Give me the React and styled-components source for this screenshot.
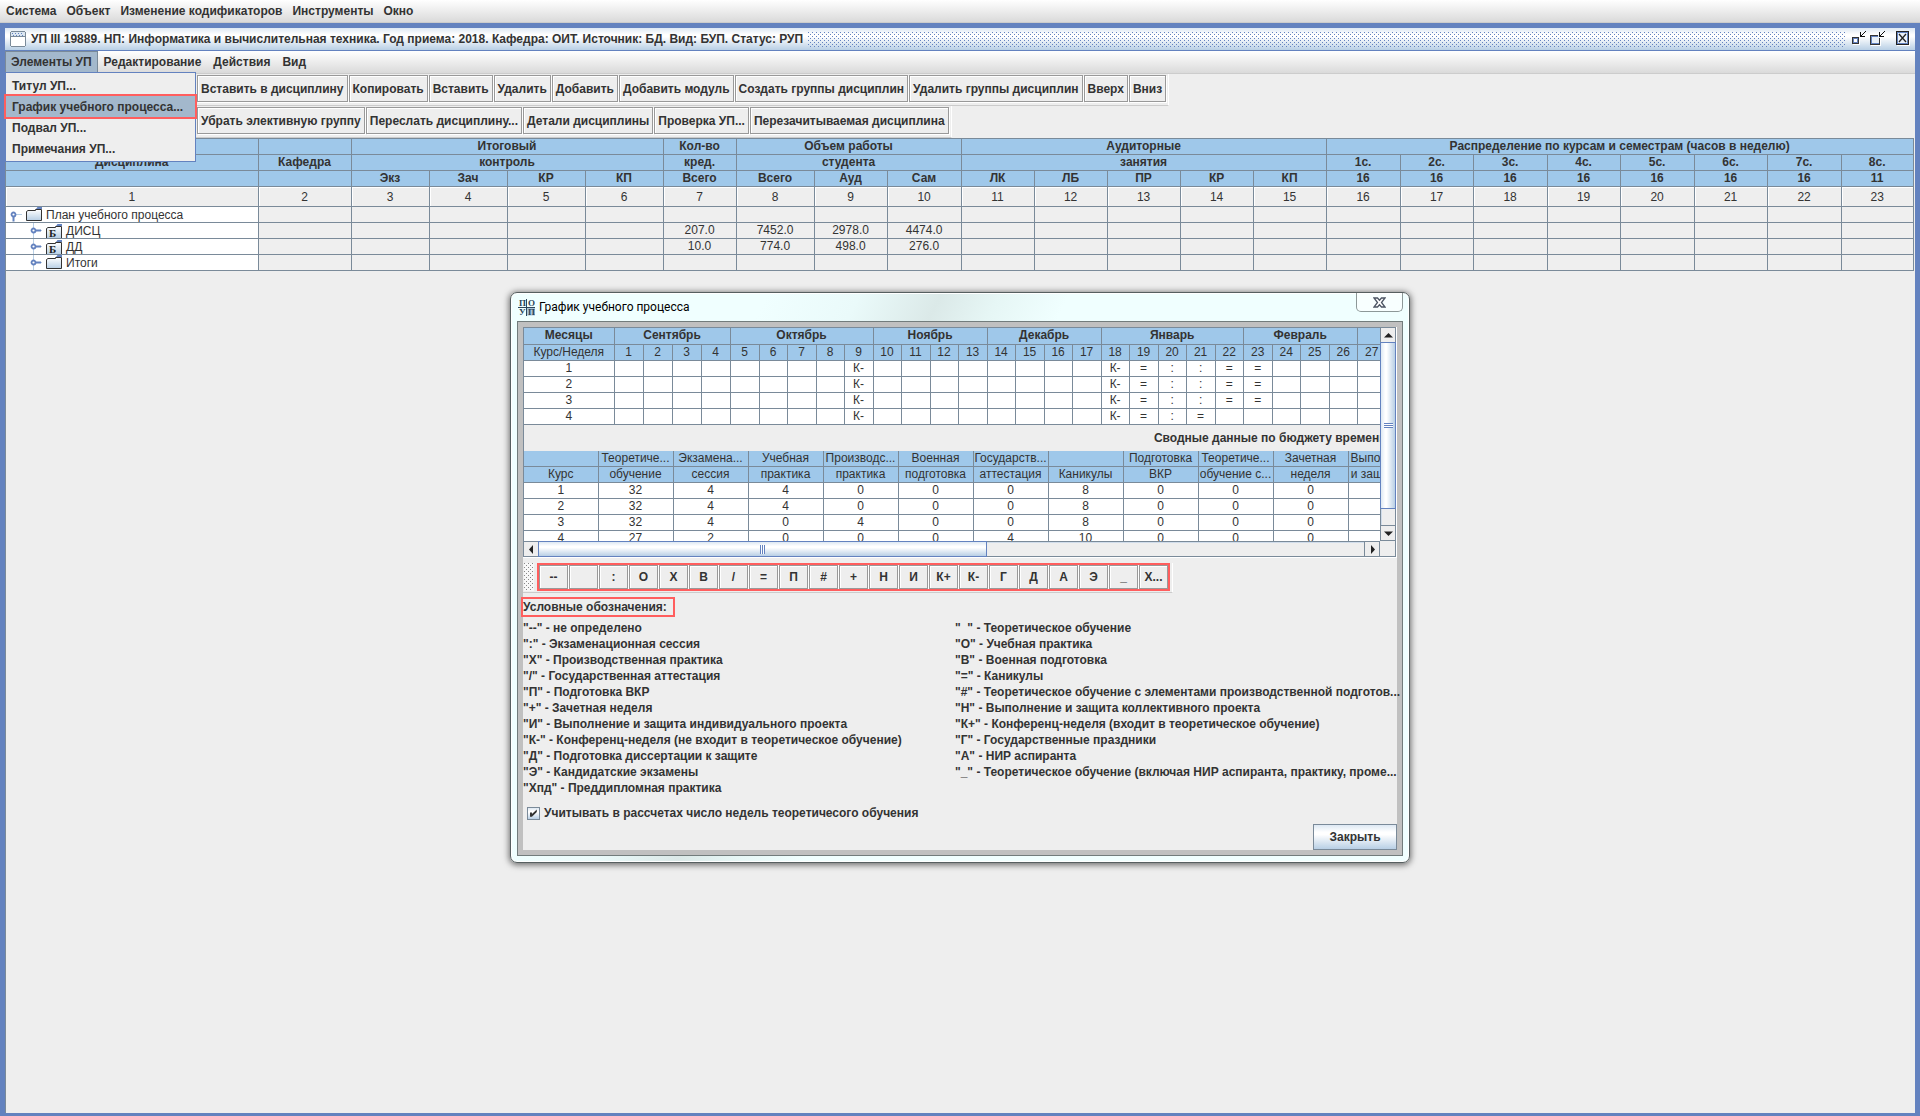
import React from "react";
import styled, { createGlobalStyle, css } from "styled-components";

const c = {
  frame: "#6382bf",
  line: "#7a8a99",
  head: "#9fc8ea",
  panel: "#eeeeee",
  text: "#333333",
  mark: "#ff5e5e",
  select: "#a3b8cc",
};

const Global = createGlobalStyle`
  * { box-sizing: border-box; }
  body { margin: 0; background: ${c.panel}; color: ${c.text}; font: bold 12px/16px "Liberation Sans", Arial, sans-serif; }
  button, input { font: inherit; color: inherit; margin: 0; }
  button { border-radius: 0; white-space: nowrap; }
`;

const metal = css`
  background: linear-gradient(#dde8f3 0%, #ffffff 30%, #ffffff 40%, #b8cfe5 100%);
`;

const dots = (color) => css`
  background-image: conic-gradient(at 1px 1px, transparent 75%, ${color} 0),
    conic-gradient(at 1px 1px, transparent 75%, ${color} 0);
  background-size: 4px 4px;
  background-position: 0 0, 2px 2px;
`;

const Page = styled.div`
  min-height: 100vh;
  display: flex;
  flex-direction: column;
`;

const MenuBar = styled.nav`
  height: 23px;
  display: flex;
  align-items: stretch;
  padding-left: ${(p) => p.$inset || 0}px;
  background: linear-gradient(#ffffff, #dadada);
  border-bottom: 1px solid #cccccc;
`;

const MenuTitle = styled.button`
  border: 1px solid ${(p) => (p.$open ? c.line : "transparent")};
  border-bottom: 0;
  background: ${(p) => (p.$open ? c.select : "transparent")};
  padding: 0 ${(p) => p.$pad || 5}px 2px;
`;

const Frame = styled.main`
  flex: 1;
  display: flex;
  flex-direction: column;
  border: solid ${c.frame};
  border-width: 5px 5px 3px;
  background: ${c.panel};
`;

const TitleBar = styled.header`
  height: 23px;
  display: flex;
  align-items: center;
  gap: 5px;
  padding: 0 4px 0 5px;
  border-bottom: 1px solid ${c.frame};
  ${metal}
`;

const WindowTitle = styled.h1`
  margin: 0;
  font: inherit;
  white-space: nowrap;
`;

const Bumps = styled.div`
  flex: 1;
  height: 15px;
  ${dots("#6382bf")}
`;

const IconButton = styled.button`
  display: flex;
  padding: 0;
  border: 0;
  background: none;
`;

const Controls = styled.div`
  display: flex;
  gap: 2px;
  & > :last-child { margin-left: 8px; }
`;

const Body = styled.div`
  flex: 1;
  border-left: 1px solid ${c.line};
  position: relative;
`;

const MenuPopup = styled.div`
  position: absolute;
  z-index: 2;
  top: -2px;
  left: -1px;
  width: 191px;
  display: flex;
  flex-direction: column;
  padding: 2px 0;
  background: ${c.panel};
  border: 1px solid ${c.frame};
`;

const MenuItem = styled.button`
  height: 21px;
  padding: 0 6px;
  text-align: left;
  border: 0;
  background: ${(p) => (p.$marked ? c.select : "transparent")};
  outline: ${(p) => (p.$marked ? `2px solid ${c.mark}` : "none")};
`;

const ToolRow = styled.div`
  width: max-content;
  display: flex;
  gap: 1px;
  padding: 1px 2px 3px 191px;
  border-right: 1px solid #ffffff;
  border-bottom: 1px solid #cccccc;
`;

const ToolButton = styled.button`
  height: 27px;
  padding: 0 3px;
  border: 1px solid #999999;
  background: ${c.panel};
  box-shadow: inset 1px 1px #ffffff, 1px 1px #ffffff;
`;

const Grid = styled.table`
  table-layout: fixed;
  border-collapse: collapse;
  width: ${(p) => p.$width || "100%"};
  font-weight: normal;
  text-align: center;
  th, td {
    height: 16px;
    padding: 0;
    line-height: 15px;
    border: 1px solid ${c.line};
    white-space: nowrap;
    overflow: hidden;
  }
  th { background: ${c.head}; font-weight: ${(p) => p.$headWeight || "bold"}; }
  td { background: ${(p) => p.$cell || "#ffffff"}; }
  th:first-child, td:first-child { border-left: 0; }
`;

const PaneGrid = styled(Grid)`
  thead tr:first-child th { border-top: 0; }
`;

const NumberRow = styled.tr`
  && td { height: 20px; padding-top: 2px; background: ${c.panel}; box-shadow: inset 1px 1px #ffffff; }
`;

const WeekHead = styled.th`
  && { font-weight: normal; }
`;

const TreeCell = styled.td`
  && { background: #ffffff; }
`;

const TreeNode = styled.div`
  height: 15px;
  display: flex;
  align-items: center;
  gap: 4px;
  padding-left: ${(p) => 4 + p.$level * 20}px;
`;

const NodeName = styled.span`
  padding-top: 2px;
`;

const Dialog = styled.section`
  position: absolute;
  z-index: 3;
  top: 292px;
  left: 0;
  right: 0;
  margin: 0 auto;
  width: 900px;
  padding: 0 6px 6px;
  border: 1px solid #565f60;
  border-radius: 7px;
  background: linear-gradient(115deg, #f0ffff 0 22%, #eafafa 30%, #dbe9e8 37%, #e6f6f5 42%, #f0ffff 48%);
  box-shadow: 0 1px 6px 1px rgba(0, 0, 0, 0.55), inset 0 0 0 1px #ffffff;
`;

const DialogTitle = styled.header`
  height: 28px;
  display: flex;
  align-items: center;
  gap: 4px;
  padding-left: 1px;
`;

const DialogName = styled.h2`
  flex: 1;
  margin: 0;
  color: #000000;
  font: 12px/16px Roboto, "Open Sans", sans-serif;
`;

const DialogClose = styled.button`
  align-self: flex-start;
  width: 47px;
  height: 19px;
  display: flex;
  align-items: center;
  justify-content: center;
  padding: 0;
  border: 1px solid #8d9898;
  border-top: 0;
  border-radius: 0 0 5px 5px;
  background: rgba(255, 255, 255, 0.5);
`;

const DialogBody = styled.div`
  display: flex;
  flex-direction: column;
  border: 1px solid #727c7c;
  background: ${c.panel};
  box-shadow: inset 0 0 0 5px #c0c0c0;
  padding: 5px;
`;

const ScrollPane = styled.div`
  display: grid;
  grid-template-columns: minmax(0, 1fr) 16px;
  grid-template-rows: 214px 16px;
  border-right: 1px solid #ffffff;
  border-bottom: 1px solid #ffffff;
`;

const Viewport = styled.div`
  overflow: hidden;
  border: solid ${c.line};
  border-width: 1px 0 0 1px;
`;

const SummaryTitle = styled.h3`
  width: 1564px;
  margin: 0;
  padding: 5px 0;
  font: inherit;
  text-align: center;
`;

const ScrollBar = styled.div`
  display: flex;
  flex-direction: ${(p) => (p.$vertical ? "column" : "row")};
  border: 1px solid ${c.line};
  box-shadow: inset 1px 1px #d0dcea;
`;

const ScrollArrow = styled.button`
  flex: 0 0 15px;
  display: flex;
  align-items: center;
  justify-content: center;
  padding: 0;
  border: solid ${c.line};
  border-width: ${(p) => p.$edge};
  background: ${c.panel};
`;

const Thumb = styled.div`
  flex: 0 0 ${(p) => p.$size};
  display: flex;
  align-items: center;
  justify-content: center;
  outline: 1px solid ${c.frame};
  background: linear-gradient(${(p) => (p.$vertical ? "90deg" : "180deg")}, #dde8f3 0%, #ffffff 30%, #ffffff 40%, #b8cfe5 100%);
`;

const Ridges = styled.i`
  width: ${(p) => (p.$vertical ? 9 : 5)}px;
  height: ${(p) => (p.$vertical ? 5 : 9)}px;
  background: repeating-linear-gradient(${(p) => (p.$vertical ? "180deg" : "90deg")}, ${c.frame} 0 1px, #ffffff 1px 2px);
`;

const Track = styled.div`
  flex: 1;
`;

const Corner = styled.div`
  border: solid ${c.line};
  border-width: 0 1px 1px 0;
`;

const SymbolBar = styled.div`
  align-self: flex-start;
  display: flex;
  align-items: stretch;
  gap: 3px;
  margin-top: 5px;
  padding: 0 2px 1px 1px;
  border-right: 1px solid #ffffff;
  border-bottom: 1px solid #cccccc;
`;

const Grip = styled.div`
  width: 10px;
  background-color: #f8f8f8;
  ${dots("#888888")}
`;

const Symbols = styled.div`
  display: flex;
  gap: 1px;
  border: 2px solid ${c.mark};
  background: #ffffff;
`;

const SymbolButton = styled.button`
  width: 29px;
  height: 24px;
  padding: 0;
  border: 1px solid #999999;
  background: ${c.panel};
  box-shadow: inset 1px 1px #ffffff;
`;

const LegendTitle = styled.h3`
  align-self: flex-start;
  margin: 4px 0 3px -2px;
  padding: 0 6px 0 0;
  border: 2px solid ${c.mark};
  font: inherit;
`;

const Legend = styled.div`
  display: grid;
  grid-template-columns: 432px auto;
`;

const LegendList = styled.ul`
  margin: 0;
  padding: 0;
  list-style: none;
  white-space: pre;
`;

const CheckLabel = styled.label`
  display: flex;
  align-items: center;
  gap: 4px;
  margin: 9px 0 0 4px;
`;

const Check = styled.input`
  appearance: none;
  width: 13px;
  height: 13px;
  border: 1px solid ${c.line};
  ${metal}
  &:checked::before {
    content: "";
    display: block;
    width: 11px;
    height: 11px;
    background: ${c.text};
    clip-path: polygon(18% 45%, 36% 45%, 36% 60%, 80% 18%, 80% 42%, 36% 84%, 18% 84%);
  }
`;

const Footer = styled.footer`
  display: flex;
  justify-content: flex-end;
  margin-top: 3px;
`;

const CloseButton = styled.button`
  width: 84px;
  height: 26px;
  border: 1px solid ${c.line};
  padding: 0;
  ${metal}
`;

const IconText = styled.text`
  font: bold ${(p) => p.$size}px "Liberation Serif", "Times New Roman", serif;
  fill: ${(p) => p.$ink};
`;

const WindowIcon = () => (
  <svg width="16" height="16" viewBox="0 0 16 16" shapeRendering="crispEdges">
    <path d="M1 0h14v1h1v14h-1v1H1v-1H0V1h1z" fill="#7a8a99" />
    <path d="M1 1h14v14H1z" fill="#fff" />
    <path d="M1 1h14v4H1z" fill="#dbe6f1" />
    <path d="M2 2.500h12M3 4.500h12" stroke="#6382bf" strokeDasharray="1 2" />
    <path d="M1 5.500h14" stroke="#7a8a99" />
  </svg>
);

const arrowDownLeft = "M0 1h1v3h1V3h1V2h1V1h1V0h1v1H5v1H4v1H3v1H2v1h3v1H0z";

const IconifyIcon = () => (
  <svg width="16" height="16" viewBox="0 0 16 16" shapeRendering="crispEdges">
    <path d="M2 7h7v7H2z" fill="#fff" />
    <path d="M1 6h7v7H1z" fill="#333" />
    <path d="M2 7h5v5H2z" fill="#6382bf" />
    <path d="M3 8h3v3H3z" fill="#fff" />
    <path d={arrowDownLeft} transform="translate(9 0)" fill="#111" />
  </svg>
);

const RestoreIcon = () => (
  <svg width="16" height="16" viewBox="0 0 16 16" shapeRendering="crispEdges">
    <path d="M2 5h10v10H2z" fill="#fff" />
    <path d="M1 4h10v10H1z" fill="#333" />
    <path d="M2 5h8v8H2z" fill="#6382bf" />
    <path d="M3 6h7v6H3z" fill="#e8f0f8" />
    <path d="M9 4h2v3H9z" fill="#e8f0f8" />
    <path d={arrowDownLeft} transform="translate(10 0)" fill="#111" />
  </svg>
);

const CloseIcon = () => (
  <svg width="16" height="16" viewBox="0 0 16 16">
    <path d="M2 1h13v14H2z" fill="#fff" />
    <rect x="1.500" y="0.500" width="12" height="13" fill="#eaf1f9" stroke="#222" />
    <rect x="2.500" y="1.500" width="10" height="11" fill="none" stroke="#6382bf" />
    <path d="M4 3l7 8M11 3l-7 8" stroke="#222" strokeWidth="1.300" />
  </svg>
);

const AppIcon = () => (
  <svg width="17" height="17" viewBox="0 0 17 17">
    <path d="M8 8.500h9v8H8z" fill="#a9c3d8" />
    <path d="M0 8.500h17M8.500 0v17" stroke="#2b4459" />
    <IconText x="1" y="7" $size={9} $ink="#2b4459">П</IconText>
    <IconText x="10" y="7" $size={9} $ink="#2b4459">О</IconText>
    <IconText x="1" y="16" $size={9} $ink="#2b4459">У</IconText>
    <IconText x="10" y="16" $size={9} $ink="#2b4459">П</IconText>
  </svg>
);

const CrossIcon = () => (
  <svg width="13" height="11" viewBox="0 0 13 11">
    <path d="M1 1h3.500l2 2.200L8.500 1H12L8.500 5.500 12 10H8.500l-2-2.200L4.500 10H1l3.500-4.500z" fill="#fff" stroke="#4c5564" strokeWidth="1.300" />
  </svg>
);

const Handle = ({ open, level }) => (
  <svg width="12" height="15" viewBox="0 0 12 15">
    <path d={level ? "M6 7.500h6M3.500 0v15" : "M6 7.500h6"} stroke="#b8cfe5" />
    <circle cx="3.500" cy="7.500" r="2" fill="#fff" stroke="#6382bf" strokeWidth="1.800" />
    <path d={open ? "M3.500 9.500v5" : "M6 7.500h5"} stroke="#6382bf" strokeWidth="2" />
  </svg>
);

const Folder = ({ base }) => (
  <svg width="16" height="15" viewBox="0 0 16 15">
    <defs>
      <linearGradient id="folder" x1="0" y1="0" x2="0" y2="1">
        <stop offset="0" stopColor="#fff" />
        <stop offset="1" stopColor="#b8cfe5" />
      </linearGradient>
    </defs>
    <path d={base ? "M0.500 15V5.500l1.500-1H9.500v-1h6V15" : "M0.500 13.500V4.500l1.500-1H9.500v-1h6v11z"} fill="url(#folder)" stroke="#333" />
    <path d={base ? "M10 3l1.500-2H16v2z" : "M10 2l1.500-2H16v2z"} fill="#6382bf" />
    {base && <IconText x="3" y="14" $size={11} $ink="#222">Б</IconText>}
  </svg>
);

const Arrow = ({ d }) => (
  <svg width="9" height="9" viewBox="0 0 9 9">
    <path d={d} fill="#222" />
  </svg>
);

const toolsTop = ["Вставить в дисциплину", "Копировать", "Вставить", "Удалить", "Добавить", "Добавить модуль", "Создать группы дисциплин", "Удалить группы дисциплин", "Вверх", "Вниз"];
const toolsBottom = ["Убрать элективную группу", "Переслать дисциплину...", "Детали дисциплины", "Проверка УП...", "Перезачитываемая дисциплина"];

const planCols = [252, 93, 78, 78, 78, 78, 73, 78, 73, 74, 73, 73, 73, 73, 73, 74, 73, 74, 73, 74, 73, 74, 72];
const planLeaf = ["", "", "Экз", "Зач", "КР", "КП", "Всего", "Всего", "Ауд", "Сам", "ЛК", "ЛБ", "ПР", "КР", "КП", "16", "16", "16", "16", "16", "16", "16", "11"];
const planRows = [
  { name: "План учебного процесса", level: 0, open: true },
  { name: "ДИСЦ", level: 1, base: true, totals: ["207.0", "7452.0", "2978.0", "4474.0"] },
  { name: "ДД", level: 1, base: true, totals: ["10.0", "774.0", "498.0", "276.0"] },
  { name: "Итоги", level: 1 },
];

const months = [["Сентябрь", 4], ["Октябрь", 5], ["Ноябрь", 4], ["Декабрь", 4], ["Январь", 5], ["Февраль", 4], ["", 1]];
const weeks = Array.from({ length: 27 }, (_, i) => i + 1);
const weekWidth = (w) => (w <= 5 || w % 2 ? 29 : 28);
const weekTotal = 90 + weeks.reduce((sum, w) => sum + weekWidth(w), 0);
const common = { 9: "К-", 18: "К-", 19: "=", 20: ":", 21: ":", 22: "=", 23: "=" };
const courses = [common, common, common, { 9: "К-", 18: "К-", 19: "=", 20: ":", 21: "=" }];

const summaryTop = ["", "Теоретиче...", "Экзамена...", "Учебная", "Производс...", "Военная", "Государств...", "", "Подготовка", "Теоретиче...", "Зачетная", "Выполнение"];
const summaryLow = ["Курс", "обучение", "сессия", "практика", "практика", "подготовка", "аттестация", "Каникулы", "ВКР", "обучение с...", "неделя", "и защита к..."];
const summaryRows = [
  [1, 32, 4, 4, 0, 0, 0, 8, 0, 0, 0, ""],
  [2, 32, 4, 4, 0, 0, 0, 8, 0, 0, 0, ""],
  [3, 32, 4, 0, 4, 0, 0, 8, 0, 0, 0, ""],
  [4, 27, 2, 0, 0, 0, 4, 10, 0, 0, 0, ""],
];

const symbols = ["--", "", ":", "О", "Х", "В", "/", "=", "П", "#", "+", "Н", "И", "К+", "К-", "Г", "Д", "А", "Э", "_", "Х..."];
const legendLeft = [
  '"--" - не определено',
  '":" - Экзаменационная сессия',
  '"Х" - Производственная практика',
  '"/" - Государственная аттестация',
  '"П" - Подготовка ВКР',
  '"+" - Зачетная неделя',
  '"И" - Выполнение и защита индивидуального проекта',
  '"К-" - Конференц-неделя (не входит в теоретическое обучение)',
  '"Д" - Подготовка диссертации к защите',
  '"Э" - Кандидатские экзамены',
  '"Хпд" - Преддипломная практика',
];
const legendRight = [
  '"  " - Теоретическое обучение',
  '"О" - Учебная практика',
  '"В" - Военная подготовка',
  '"=" - Каникулы',
  '"#" - Теоретическое обучение с элементами производственной подготов...',
  '"Н" - Выполнение и защита коллективного проекта',
  '"К+" - Конференц-неделя (входит в теоретическое обучение)',
  '"Г" - Государственные праздники',
  '"А" - НИР аспиранта',
  '"_" - Теоретическое обучение (включая НИР аспиранта, практику, проме...',
];

const Cols = ({ widths }) => (
  <colgroup>{widths.map((w, i) => <col key={i} width={w} />)}</colgroup>
);

const PlanTable = () => (
  <Grid $cell="#efefef" $width="calc(100% - 2px)">
    <Cols widths={planCols} />
    <thead>
      <tr>
        <th /><th />
        <th colSpan={4}>Итоговый</th>
        <th>Кол-во</th>
        <th colSpan={3}>Объем работы</th>
        <th colSpan={5}>Аудиторные</th>
        <th colSpan={8}>Распределение по курсам и семестрам (часов в неделю)</th>
      </tr>
      <tr>
        <th>Дисциплина</th>
        <th>Кафедра</th>
        <th colSpan={4}>контроль</th>
        <th>кред.</th>
        <th colSpan={3}>студента</th>
        <th colSpan={5}>занятия</th>
        {[1, 2, 3, 4, 5, 6, 7, 8].map((n) => <th key={n}>{n}с.</th>)}
      </tr>
      <tr>{planLeaf.map((t, i) => <th key={i}>{t}</th>)}</tr>
    </thead>
    <tbody>
      <NumberRow>{planCols.map((_, i) => <td key={i}>{i + 1}</td>)}</NumberRow>
      {planRows.map((r) => (
        <tr key={r.name}>
          <TreeCell>
            <TreeNode $level={r.level}>
              <Handle open={r.open} level={r.level} />
              <Folder base={r.base} />
              <NodeName>{r.name}</NodeName>
            </TreeNode>
          </TreeCell>
          {planCols.slice(1).map((_, i) => <td key={i}>{r.totals && r.totals[i - 5]}</td>)}
        </tr>
      ))}
    </tbody>
  </Grid>
);

const WeeksTable = () => (
  <PaneGrid $width={`${weekTotal}px`}>
    <Cols widths={[90, ...weeks.map(weekWidth)]} />
    <thead>
      <tr>
        <th>Месяцы</th>
        {months.map(([m, span]) => <th key={m} colSpan={span}>{m}</th>)}
      </tr>
      <tr>
        <WeekHead>Курс/Неделя</WeekHead>
        {weeks.map((w) => <WeekHead key={w}>{w}</WeekHead>)}
      </tr>
    </thead>
    <tbody>
      {courses.map((marks, i) => (
        <tr key={i}>
          <td>{i + 1}</td>
          {weeks.map((w) => <td key={w}>{marks[w]}</td>)}
        </tr>
      ))}
    </tbody>
  </PaneGrid>
);

const SummaryTable = () => (
  <PaneGrid $width="899px" $headWeight="normal">
    <Cols widths={summaryTop.map((_, i) => (i ? 75 : 74))} />
    <thead>
      <tr>{summaryTop.map((t, i) => <th key={i}>{t}</th>)}</tr>
      <tr>{summaryLow.map((t, i) => <th key={i}>{t}</th>)}</tr>
    </thead>
    <tbody>
      {summaryRows.map((row) => (
        <tr key={row[0]}>{row.map((v, i) => <td key={i}>{v}</td>)}</tr>
      ))}
    </tbody>
  </PaneGrid>
);

const ScheduleDialog = () => (
  <Dialog role="dialog" aria-label="График учебного процесса">
    <DialogTitle>
      <AppIcon />
      <DialogName>График учебного процесса</DialogName>
      <DialogClose aria-label="Закрыть окно"><CrossIcon /></DialogClose>
    </DialogTitle>
    <DialogBody>
      <ScrollPane>
        <Viewport>
          <WeeksTable />
          <SummaryTitle>Сводные данные по бюджету времени (в неделях)</SummaryTitle>
          <SummaryTable />
        </Viewport>
        <ScrollBar $vertical>
          <ScrollArrow $edge="0 0 1px" aria-label="Вверх"><Arrow d="M0 6.500L4.500 2 9 6.500z" /></ScrollArrow>
          <Thumb $vertical $size="165px"><Ridges $vertical /></Thumb>
          <Track />
          <ScrollArrow $edge="1px 0 0" aria-label="Вниз"><Arrow d="M0 2.500L4.500 7 9 2.500z" /></ScrollArrow>
        </ScrollBar>
        <ScrollBar>
          <ScrollArrow $edge="0 1px 0 0" aria-label="Влево"><Arrow d="M6 0L2 4.500 6 9z" /></ScrollArrow>
          <Thumb $size="447px"><Ridges /></Thumb>
          <Track />
          <ScrollArrow $edge="0 0 0 1px" aria-label="Вправо"><Arrow d="M3 0l4 4.500L3 9z" /></ScrollArrow>
        </ScrollBar>
        <Corner />
      </ScrollPane>
      <SymbolBar>
        <Grip />
        <Symbols>
          {symbols.map((s, i) => <SymbolButton key={i} aria-label={s || "Теоретическое обучение"}>{s}</SymbolButton>)}
        </Symbols>
      </SymbolBar>
      <LegendTitle>Условные обозначения:</LegendTitle>
      <Legend>
        <LegendList>{legendLeft.map((t) => <li key={t}>{t}</li>)}</LegendList>
        <LegendList>{legendRight.map((t) => <li key={t}>{t}</li>)}</LegendList>
      </Legend>
      <CheckLabel>
        <Check type="checkbox" defaultChecked />
        Учитывать в рассчетах число недель теоретичесого обучения
      </CheckLabel>
      <Footer><CloseButton>Закрыть</CloseButton></Footer>
    </DialogBody>
  </Dialog>
);

export default function App() {
  return (
    <Page>
      <Global />
      <MenuBar $inset={1}>
        {["Система", "Объект", "Изменение кодификаторов", "Инструменты", "Окно"].map((t) => <MenuTitle key={t} $pad={4}>{t}</MenuTitle>)}
      </MenuBar>
      <Frame>
        <TitleBar>
          <WindowIcon />
          <WindowTitle>УП III 19889. НП: Информатика и вычислительная техника. Год приема: 2018. Кафедра: ОИТ. Источник: БД. Вид: БУП. Статус: РУП</WindowTitle>
          <Bumps />
          <Controls>
            <IconButton aria-label="Свернуть"><IconifyIcon /></IconButton>
            <IconButton aria-label="Восстановить"><RestoreIcon /></IconButton>
            <IconButton aria-label="Закрыть"><CloseIcon /></IconButton>
          </Controls>
        </TitleBar>
        <MenuBar>
          <MenuTitle $open>Элементы УП</MenuTitle>
          {["Редактирование", "Действия", "Вид"].map((t) => <MenuTitle key={t}>{t}</MenuTitle>)}
        </MenuBar>
        <Body>
          <MenuPopup>
            <MenuItem>Титул УП...</MenuItem>
            <MenuItem $marked>График учебного процесса...</MenuItem>
            <MenuItem>Подвал УП...</MenuItem>
            <MenuItem>Примечания УП...</MenuItem>
          </MenuPopup>
          <ToolRow>{toolsTop.map((t) => <ToolButton key={t}>{t}</ToolButton>)}</ToolRow>
          <ToolRow>{toolsBottom.map((t) => <ToolButton key={t}>{t}</ToolButton>)}</ToolRow>
          <PlanTable />
        </Body>
      </Frame>
      <ScheduleDialog />
    </Page>
  );
}
